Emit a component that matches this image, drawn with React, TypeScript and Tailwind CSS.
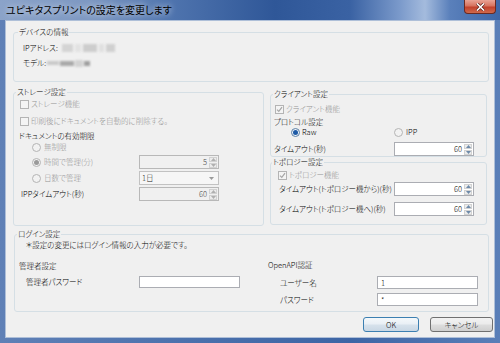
import React from "react";

function Checkbox({ checked = false }: { checked?: boolean }) {
  return (
    <span className="w-[9px] h-[9px] shrink-0 border border-[#b4b4b4] bg-[#f4f4f4] flex items-center justify-center">
      {checked && (
        <svg width="7" height="7" viewBox="0 0 7 7">
          <path d="M1 3.6 L2.8 5.4 L6 1.2" stroke="#a6a6a6" strokeWidth="1.2" fill="none" />
        </svg>
      )}
    </span>
  );
}

function Radio({ checked = false, active = false }: { checked?: boolean; active?: boolean }) {
  return (
    <span
      className={
        "w-[9px] h-[9px] shrink-0 rounded-full border flex items-center justify-center " +
        (active ? "border-[#5b7fa6] bg-[#eef3f8]" : "border-[#b4b4b4] bg-[#f2f2f2]")
      }
    >
      {checked && (
        <span
          className={
            "w-[5px] h-[5px] rounded-full " + (active ? "bg-[#1d5aa6]" : "bg-[#9a9a9a]")
          }
        />
      )}
    </span>
  );
}

function Tri({ up, color = "#8a8a8a" }: { up: boolean; color?: string }) {
  return (
    <svg width="5" height="3" viewBox="0 0 5 3">
      <path d={up ? "M0 3 L2.5 0 L5 3 Z" : "M0 0 L2.5 3 L5 0 Z"} fill={color} />
    </svg>
  );
}

function SpinBox({ value, disabled = false }: { value: string; disabled?: boolean }) {
  return (
    <div
      className={
        "w-[80px] h-[14px] shrink-0 border flex " +
        (disabled ? "border-[#b8b8b8] bg-[#f0f0f0] text-[#444]" : "border-[#abadb3] bg-white text-black")
      }
    >
      <div className="flex-1 text-right pr-[2px] leading-[12px]">{value}</div>
      <div className="w-[9px] flex flex-col gap-[1px] py-[1px] pr-[1px]">
        <div className="flex-1 flex items-center justify-center bg-[#ececec] border border-[#d2d2d2]">
          <Tri up color={disabled ? "#b0b0b0" : "#6d89a8"} />
        </div>
        <div className="flex-1 flex items-center justify-center bg-[#ececec] border border-[#d2d2d2]">
          <Tri up={false} color={disabled ? "#b0b0b0" : "#6d89a8"} />
        </div>
      </div>
    </div>
  );
}

function TextBox({ value = "", h = "h-[13px]" }: { value?: string; h?: string }) {
  return (
    <div className={"w-[101px] shrink-0 border border-[#abadb3] bg-white pl-[3px] leading-[11px] text-black " + h}>
      {value}
    </div>
  );
}

export default function App() {
  return (
    <div className="w-[500px] h-[343px] flex flex-col bg-[linear-gradient(90deg,#5f80b6_0%,#4a70ac_40%,#3d65a5_70%,#5a7fb8_100%)] font-['Noto_Sans_CJK_JP','Noto_Sans',sans-serif] font-light [font-feature-settings:'palt'] text-[7.5px] leading-[10px] text-black">
      {/* Title bar */}
      <div className="h-[20px] shrink-0 flex justify-between bg-[linear-gradient(90deg,#8ba3c9_0%,#7d98c2_18%,#4f74ae_34%,#2f5798_55%,#3a62a3_70%,#7b9acb_80%,#a4bbdd_85%,#5a80bb_90%,#3d66a7_100%)]">
        <div className="pl-[6px] flex items-center text-[10px] font-normal text-black [text-shadow:0_0_6px_rgba(255,255,255,0.95)]">
          ユピキタスプリントの設定を変更します
        </div>
        <div className="mr-[4px] w-[32px] h-[14px] rounded-b-[4px] border border-t-0 border-[#6b2a22] bg-[linear-gradient(180deg,#e9a395_0%,#d7735f_45%,#c2412c_55%,#cf6a4c_100%)] flex items-center justify-center">
          <svg width="9" height="8" viewBox="0 0 9 8">
            <path d="M1 0.5 L8 7.5 M8 0.5 L1 7.5" stroke="#5a1f18" strokeWidth="3" />
            <path d="M1 0.5 L8 7.5 M8 0.5 L1 7.5" stroke="#ffffff" strokeWidth="1.6" />
          </svg>
        </div>
      </div>

      {/* Client area */}
      <div className="flex-1 mx-[5px] mb-[5px] bg-[#f0f0f0] border border-[#aebfd8] pl-[7px] pt-[6px] pb-[5px] flex flex-col">
        {/* Device info */}
        <fieldset className="w-[476px] border border-[#d5dfe5] rounded-[3px] p-0 m-0 min-w-0">
          <legend className="ml-[4px] px-[1px] leading-[10px]">デバイスの情報</legend>
          <div className="pl-[9px] pt-[6px] pb-[13px] flex flex-col">
            <div className="h-[10px] flex items-center">
              <span>IPアドレス:</span>
              <div className="ml-[4px] flex items-center gap-[2px] blur-[0.8px]">
                <span className="w-[11px] h-[8px] bg-[#d4d4d4]" />
                <span className="w-[6px] h-[8px] bg-[#e2e2e2]" />
                <span className="w-[14px] h-[8px] bg-[#cdcdcd]" />
                <span className="w-[5px] h-[8px] bg-[#e0e0e0]" />
                <span className="w-[9px] h-[8px] bg-[#d0d0d0]" />
              </div>
            </div>
            <div className="h-[10px] mt-[5px] flex items-center">
              <span>モデル:</span>
              <div className="ml-[1px] flex items-center gap-[1px] blur-[0.8px]">
                <span className="w-[12px] h-[4px] bg-[#c9c9c9]" />
                <span className="w-[14px] h-[5px] bg-[#a9a9a9]" />
                <span className="w-[8px] h-[7px] bg-[#d2d2d2]" />
                <span className="w-[6px] h-[5px] bg-[#9f9f9f]" />
              </div>
            </div>
          </div>
        </fieldset>

        {/* Middle row */}
        <div className="flex items-start mt-[5px]">
          {/* Storage */}
          <fieldset className="w-[251px] border border-[#d5dfe5] rounded-[3px] p-0 m-0 min-w-0">
            <legend className="ml-[2px] px-[1px] leading-[10px]">ストレージ設定</legend>
            <div className="pl-[6px] pt-[2px] pb-[24px] flex flex-col">
              <div className="h-[10px] flex items-center gap-[2px] text-[#939393]">
                <Checkbox />
                <span>ストレージ機能</span>
              </div>
              <div className="h-[10px] mt-[7px] flex items-center gap-[2px] text-[#939393]">
                <Checkbox />
                <span>印刷後にドキュメントを自動的に削除する。</span>
              </div>
              <div className="h-[10px] mt-[5px] -ml-[1px]">ドキュメントの有効期限</div>
              <div className="h-[10px] mt-[1px] ml-[12px] flex items-center gap-[3px] text-[#939393]">
                <Radio />
                <span>無制限</span>
              </div>
              <div className="h-[14px] mt-[3px] ml-[12px] flex items-center">
                <div className="w-[107px] flex items-center gap-[3px] text-[#939393]">
                  <Radio checked />
                  <span>時間で管理(分)</span>
                </div>
                <SpinBox value="5" disabled />
              </div>
              <div className="h-[14px] mt-[2px] ml-[12px] flex items-center">
                <div className="w-[107px] flex items-center gap-[3px] text-[#939393]">
                  <Radio />
                  <span>日数で管理</span>
                </div>
                <div className="w-[80px] h-[14px] border border-[#c2c2c2] bg-[#f6f6f6] flex items-center justify-between pl-[2px] pr-[4px] text-[#222]">
                  <span className="leading-[12px]">1日</span>
                  <Tri up={false} color="#9a9a9a" />
                </div>
              </div>
              <div className="h-[14px] mt-[2px] ml-[1px] flex items-center">
                <div className="w-[118px]">IPPタイムアウト(秒)</div>
                <SpinBox value="60" disabled />
              </div>
            </div>
          </fieldset>

          {/* Right column */}
          <div className="ml-[6px] mt-[2px] flex flex-col w-[217px]">
            <fieldset className="w-[217px] border border-[#d5dfe5] rounded-[3px] p-0 m-0 min-w-0">
              <legend className="ml-[2px] px-[1px] leading-[10px]">クライアント設定</legend>
              <div className="pl-[3px] pt-[5px] flex flex-col">
                <div className="h-[10px] ml-[1px] flex items-center gap-[2px] text-[#939393]">
                  <Checkbox checked />
                  <span>クライアント機能</span>
                </div>
                <div className="h-[10px] mt-[3px]">プロトコル設定</div>
                <div className="h-[10px] flex items-center">
                  <div className="ml-[17px] w-[103px] flex items-center gap-[2px]">
                    <Radio checked active />
                    <span>Raw</span>
                  </div>
                  <div className="flex items-center gap-[3px]">
                    <Radio />
                    <span>IPP</span>
                  </div>
                </div>
                <div className="h-[14px] mt-[5px] flex items-center">
                  <div className="w-[120px]">タイムアウト(秒)</div>
                  <SpinBox value="60" />
                </div>
              </div>
            </fieldset>

            <fieldset className="w-[217px] border border-[#d5dfe5] rounded-[3px] p-0 m-0 min-w-0">
              <legend className="ml-[1px] px-[1px] leading-[10px]">トポロジー設定</legend>
              <div className="pl-[7px] pt-[3px] pb-[8px] flex flex-col">
                <div className="h-[10px] flex items-center gap-[2px] text-[#939393]">
                  <Checkbox checked />
                  <span>トポロジー機能</span>
                </div>
                <div className="h-[14px] mt-[2px] flex items-center">
                  <div className="ml-[1px] w-[115px] whitespace-nowrap">タイムアウト(トポロジー機から)(秒)</div>
                  <SpinBox value="60" />
                </div>
                <div className="h-[14px] mt-[6px] flex items-center">
                  <div className="ml-[1px] w-[115px] whitespace-nowrap">タイムアウト(トポロジー機へ)(秒)</div>
                  <SpinBox value="60" />
                </div>
              </div>
            </fieldset>
          </div>
        </div>

        {/* Login */}
        <fieldset className="ml-[1px] mt-[3px] w-[475px] border border-[#d5dfe5] rounded-[3px] p-0 m-0 min-w-0">
          <legend className="ml-[2px] px-[1px] leading-[10px]">ログイン設定</legend>
          <div className="pl-[4px] pt-[1px] pb-[5px] flex flex-col">
            <div className="h-[10px] ml-[7px]">＊設定の変更にはログイン情報の入力が必要です。</div>
            <div className="flex mt-[10px]">
              <div className="w-[249px] flex flex-col pt-[1px]">
                <div className="h-[10px]">管理者設定</div>
                <div className="h-[12px] mt-[5px] ml-[7px] flex items-center">
                  <div className="w-[113px]">管理者パスワード</div>
                  <TextBox h="h-[12px]" />
                </div>
              </div>
              <div className="flex flex-col">
                <div className="h-[10px]">OpenAPI認証</div>
                <div className="h-[13px] mt-[6px] ml-[12px] flex items-center">
                  <div className="w-[97px]">ユーザー名</div>
                  <TextBox value="1" />
                </div>
                <div className="h-[13px] mt-[4px] ml-[12px] flex items-center">
                  <div className="w-[97px]">パスワード</div>
                  <TextBox value="*" />
                </div>
              </div>
            </div>
          </div>
        </fieldset>

        {/* Buttons */}
        <div className="mt-[5px] flex justify-end gap-[11px] pr-[1px]">
          <button className="w-[56px] h-[15px] rounded-[3px] border border-[#3c7fb1] bg-[linear-gradient(180deg,#f4f8fb_0%,#e9eff5_48%,#d7e2ec_52%,#c9d7e4_100%)] text-[7.5px] leading-[13px] text-black">
            OK
          </button>
          <button className="w-[63px] h-[15px] rounded-[3px] border border-[#707070] bg-[linear-gradient(180deg,#f2f2f2_0%,#ebebeb_48%,#dddddd_52%,#cfcfcf_100%)] text-[7.5px] leading-[13px] text-black">
            キャンセル
          </button>
        </div>
      </div>
    </div>
  );
}
